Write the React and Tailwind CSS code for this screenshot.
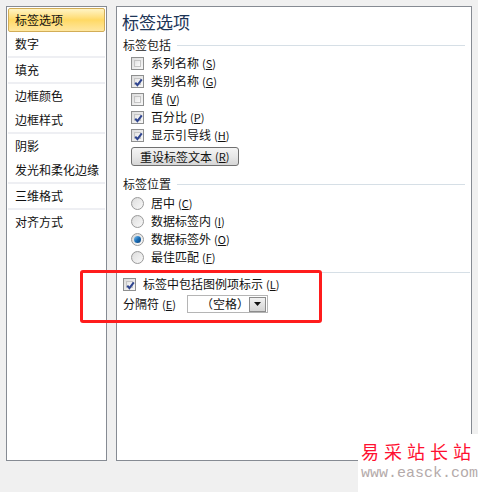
import React from "react";

const font = { fontFamily: '"Noto Sans CJK SC", "Liberation Sans", sans-serif' };

const groups = [
  ["标签选项", "数字"],
  ["填充"],
  ["边框颜色", "边框样式"],
  ["阴影", "发光和柔化边缘"],
  ["三维格式"],
  ["对齐方式"],
];

const Key = ({ k }) => (
  <span className="ml-[3px] text-[11px]">
    (<span className="underline">{k}</span>)
  </span>
);

const CheckBox = ({ checked }) => (
  <span className="flex h-[13px] w-[13px] shrink-0 items-center justify-center border border-[#8e8f8f] bg-gradient-to-br from-[#dcdcdc] to-[#f8f8f8] p-[2px]">
    <span className="relative flex h-full w-full items-center justify-center border border-[#c4c4c4] bg-gradient-to-br from-[#e4e4e4] to-[#fbfbfb]">
      {checked && (
        <svg width="11" height="11" viewBox="0 0 11 11" className="absolute left-[-2px] top-[-2px]">
          <path d="M2.3 5.6 L4.4 8.2 L8.8 2.3" fill="none" stroke="#2f4590" strokeWidth="2" />
        </svg>
      )}
    </span>
  </span>
);

const Radio = ({ checked }) => (
  <span className="flex h-[13px] w-[13px] shrink-0 items-center justify-center rounded-full border border-[#9a9a9a] bg-gradient-to-br from-[#d8d8d8] to-[#fafafa]">
    {checked ? (
      <span className="h-[7px] w-[7px] rounded-full bg-gradient-to-br from-[#7fc4f0] via-[#1a70b8] to-[#0d3f78]" />
    ) : (
      <span className="h-[9px] w-[9px] rounded-full bg-gradient-to-br from-[#e0e0e0] to-[#f6f6f6]" />
    )}
  </span>
);

const SectionTitle = ({ children }) => (
  <div className="flex h-[18px] items-center pl-[6px] pr-[6px]">
    <span className="text-[12px] text-[#1a1a1a]">{children}</span>
    <span className="ml-[6px] h-px flex-1 bg-[#d6dfe6]" />
  </div>
);

export default function App() {
  return (
    <div
      className="relative flex h-[492px] w-[478px] items-start gap-[9px] bg-[#f0f0f0] pl-[6px] pt-[6px] text-[12px] text-[#111]"
      style={font}
    >
      {/* left nav */}
      <div className="flex h-[455px] w-[101px] flex-col border border-[#868b93] bg-white p-px">
        {groups.map((g, gi) => (
          <React.Fragment key={gi}>
            {gi > 0 && <div className="h-[2px] bg-[#eeeff3]" />}
            {g.map((item) =>
              item === "标签选项" ? (
                <div
                  key={item}
                  className="flex h-[24px] items-center rounded-[2px] border border-[#d2ad57] bg-gradient-to-b from-[#fff4c4] via-[#ffd964] to-[#ffe7a0] pl-[6px]"
                >
                  {item}
                </div>
              ) : (
                <div key={item} className="flex h-[24px] items-center pl-[7px]">
                  {item}
                </div>
              )
            )}
          </React.Fragment>
        ))}
      </div>

      {/* right panel */}
      <div className="flex h-[455px] w-[356px] flex-col border border-[#868b93] bg-white">
        <div className="pl-[5px] pt-[4px] text-[17px] leading-[22px] text-[#1d3557]">标签选项</div>
        <div className="mt-[3px]">
          <SectionTitle>标签包括</SectionTitle>
        </div>
        <div className="flex flex-col pl-[14px]">
          {[
            ["系列名称", "S", false],
            ["类别名称", "G", true],
            ["值", "V", false],
            ["百分比", "P", true],
            ["显示引导线", "H", true],
          ].map(([t, k, c]) => (
            <div key={t} className="flex h-[18px] items-center gap-[7px]">
              <CheckBox checked={c} />
              <span>
                {t}
                <Key k={k} />
              </span>
            </div>
          ))}
          <div className="mt-[3px] flex">
            <button className="flex h-[19px] w-[108px] items-center rounded-[3px] border border-[#707070] bg-gradient-to-b from-[#f4f4f4] via-[#e8e8e8] to-[#d6d6d6] pl-[8px] text-[12px]">
              重设标签文本
              <Key k="R" />
            </button>
          </div>
        </div>
        <div className="mt-[9px]">
          <SectionTitle>标签位置</SectionTitle>
        </div>
        <div className="mt-px flex flex-col pl-[14px]">
          {[
            ["居中", "C", false],
            ["数据标签内", "I", false],
            ["数据标签外", "O", true],
            ["最佳匹配", "F", false],
          ].map(([t, k, c]) => (
            <div key={t} className="flex h-[18px] items-center gap-[7px]">
              <Radio checked={c} />
              <span>
                {t}
                <Key k={k} />
              </span>
            </div>
          ))}
        </div>
        <div className="mr-[1px] mt-[6px] h-px bg-[#d6dfe6]" />
        <div className="mt-[2px] flex h-[18px] items-center gap-[7px] pl-[6px]">
          <CheckBox checked />
          <span>
            标签中包括图例项标示
            <Key k="L" />
          </span>
        </div>
        <div className="mt-[2px] flex h-[18px] items-center pl-[6px]">
          <span className="w-[64px]">
            分隔符
            <Key k="E" />
          </span>
          <div className="flex h-[18px] w-[81px] items-center border border-[#b5b5b5] bg-white">
            <span className="flex-1 pl-[13px] text-[12px]">（空格）</span>
            <span className="mr-px flex h-[15px] w-[17px] items-center justify-center border border-[#8c8c8c] bg-gradient-to-b from-[#f2f2f2] to-[#d4d4d4]">
              <svg width="7" height="4" viewBox="0 0 7 4">
                <path d="M0 0 H7 L3.5 4 Z" fill="#111" />
              </svg>
            </span>
          </div>
        </div>
      </div>

      {/* red annotation box */}
      <div className="absolute left-[80px] top-[270px] h-[53px] w-[242px] rounded-[3px] border-[3px] border-[#ff1c1c]" />

      {/* watermark */}
      <div className="absolute left-[358px] top-[434px] flex h-[58px] w-[120px] flex-col bg-white pl-[3px]">
        <div className="mt-[6px] flex gap-[5px] text-[18px] leading-[22px] text-[#ff1030]">
          {"易采站长站".split("").map((c, i) => (
            <span key={i}>{c}</span>
          ))}
        </div>
        <div
          className="mt-[3px] text-[15px] leading-[18px] text-[#b4aaaa]"
          style={{ fontFamily: '"Liberation Mono", monospace' }}
        >
          www.easck.com
        </div>
      </div>
    </div>
  );
}
